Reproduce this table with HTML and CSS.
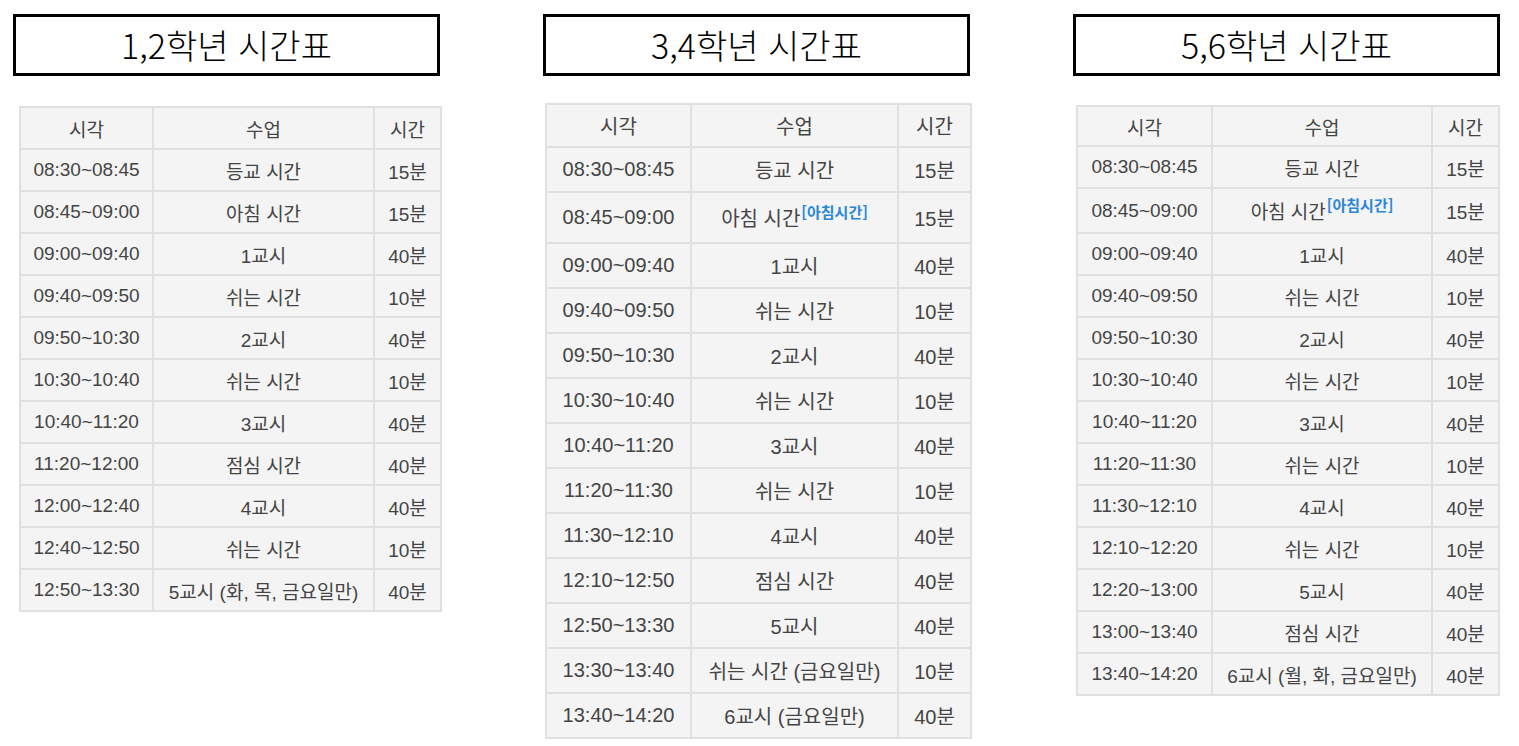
FILE: index.html
```html
<!DOCTYPE html>
<html lang="ko">
<head>
<meta charset="utf-8">
<title>시간표</title>
<link rel="stylesheet" href="styles.css">
</head>
<body>
<div class="page">
  <section class="col">
    <h2 class="title">1,2학년 시간표</h2>
    <table class="tt t1">
      <colgroup><col class="c1a"><col class="c1b"><col class="c1c"></colgroup>
      <tr><th>시각</th><th>수업</th><th>시간</th></tr>
      <tr><td>08:30~08:45</td><td>등교 시간</td><td>15분</td></tr>
      <tr><td>08:45~09:00</td><td>아침 시간</td><td>15분</td></tr>
      <tr><td>09:00~09:40</td><td>1교시</td><td>40분</td></tr>
      <tr><td>09:40~09:50</td><td>쉬는 시간</td><td>10분</td></tr>
      <tr><td>09:50~10:30</td><td>2교시</td><td>40분</td></tr>
      <tr><td>10:30~10:40</td><td>쉬는 시간</td><td>10분</td></tr>
      <tr><td>10:40~11:20</td><td>3교시</td><td>40분</td></tr>
      <tr><td>11:20~12:00</td><td>점심 시간</td><td>40분</td></tr>
      <tr><td>12:00~12:40</td><td>4교시</td><td>40분</td></tr>
      <tr><td>12:40~12:50</td><td>쉬는 시간</td><td>10분</td></tr>
      <tr><td>12:50~13:30</td><td>5교시 (화, 목, 금요일만)</td><td>40분</td></tr>
    </table>
  </section>
  <section class="col">
    <h2 class="title">3,4학년 시간표</h2>
    <table class="tt t2">
      <colgroup><col class="c2a"><col class="c2b"><col class="c2c"></colgroup>
      <tr><th>시각</th><th>수업</th><th>시간</th></tr>
      <tr><td>08:30~08:45</td><td>등교 시간</td><td>15분</td></tr>
      <tr class="tall"><td>08:45~09:00</td><td>아침 시간<sup class="ref">[아침시간]</sup></td><td>15분</td></tr>
      <tr><td>09:00~09:40</td><td>1교시</td><td>40분</td></tr>
      <tr><td>09:40~09:50</td><td>쉬는 시간</td><td>10분</td></tr>
      <tr><td>09:50~10:30</td><td>2교시</td><td>40분</td></tr>
      <tr><td>10:30~10:40</td><td>쉬는 시간</td><td>10분</td></tr>
      <tr><td>10:40~11:20</td><td>3교시</td><td>40분</td></tr>
      <tr><td>11:20~11:30</td><td>쉬는 시간</td><td>10분</td></tr>
      <tr><td>11:30~12:10</td><td>4교시</td><td>40분</td></tr>
      <tr><td>12:10~12:50</td><td>점심 시간</td><td>40분</td></tr>
      <tr><td>12:50~13:30</td><td>5교시</td><td>40분</td></tr>
      <tr><td>13:30~13:40</td><td>쉬는 시간 (금요일만)</td><td>10분</td></tr>
      <tr><td>13:40~14:20</td><td>6교시 (금요일만)</td><td>40분</td></tr>
    </table>
  </section>
  <section class="col">
    <h2 class="title">5,6학년 시간표</h2>
    <table class="tt t3">
      <colgroup><col class="c3a"><col class="c3b"><col class="c3c"></colgroup>
      <tr><th>시각</th><th>수업</th><th>시간</th></tr>
      <tr><td>08:30~08:45</td><td>등교 시간</td><td>15분</td></tr>
      <tr class="tall"><td>08:45~09:00</td><td>아침 시간<sup class="ref">[아침시간]</sup></td><td>15분</td></tr>
      <tr><td>09:00~09:40</td><td>1교시</td><td>40분</td></tr>
      <tr><td>09:40~09:50</td><td>쉬는 시간</td><td>10분</td></tr>
      <tr><td>09:50~10:30</td><td>2교시</td><td>40분</td></tr>
      <tr><td>10:30~10:40</td><td>쉬는 시간</td><td>10분</td></tr>
      <tr><td>10:40~11:20</td><td>3교시</td><td>40분</td></tr>
      <tr><td>11:20~11:30</td><td>쉬는 시간</td><td>10분</td></tr>
      <tr><td>11:30~12:10</td><td>4교시</td><td>40분</td></tr>
      <tr><td>12:10~12:20</td><td>쉬는 시간</td><td>10분</td></tr>
      <tr><td>12:20~13:00</td><td>5교시</td><td>40분</td></tr>
      <tr><td>13:00~13:40</td><td>점심 시간</td><td>40분</td></tr>
      <tr><td>13:40~14:20</td><td>6교시 (월, 화, 금요일만)</td><td>40분</td></tr>
    </table>
  </section>
</div>
</body>
</html>
```

FILE: styles.css
```css
html, body {
  margin: 0;
  padding: 0;
  background: #ffffff;
}

body {
  font-family: "Liberation Sans", "Noto Sans CJK KR", sans-serif;
  color: #444444;
}

.page {
  display: flex;
  gap: 103px;
  padding: 14px 0 0 13px;
}

.col {
  width: 427px;
  display: flex;
  flex-direction: column;
}

.title {
  box-sizing: border-box;
  height: 62px;
  margin: 0;
  border: 3px solid #000000;
  display: flex;
  align-items: center;
  justify-content: center;
  font-family: "Noto Sans CJK KR", "Liberation Sans", sans-serif;
  font-weight: 300;
  font-size: 34px;
  color: #000000;
  padding-bottom: 2px;
}

.tt {
  border-collapse: collapse;
  table-layout: fixed;
  background: #f4f4f4;
}

.tt th,
.tt td {
  border: 2px solid #e0e0e0;
  text-align: center;
  vertical-align: middle;
  padding: 0;
  font-weight: 400;
  white-space: nowrap;
}

.tt th {
  font-family: "Noto Sans CJK KR", sans-serif;
}

/* 1,2학년 */
.t1 {
  width: 421px;
  margin: 30px 0 0 6px;
  font-size: 19px;
}
.t1 th, .t1 td { height: 40px; }
.c1a { width: 133px; }
.c1b { width: 221px; }
.c1c { width: 67px; }

/* 3,4학년 */
.t2 {
  width: 425px;
  margin: 27px 0 0 2px;
  font-size: 20px;
}
.t2 th, .t2 td { height: 43px; }
.t2 th { height: 41px; }
.t2 .tall td { height: 49px; }
.c2a { width: 145px; }
.c2b { width: 207px; }
.c2c { width: 73px; }

/* 5,6학년 */
.t3 {
  width: 422px;
  margin: 29px 0 0 3px;
  font-size: 19px;
}
.t3 th, .t3 td { height: 40px; }
.t3 th { height: 38px; }
.t3 .tall td { height: 43px; }
.c3a { width: 135px; }
.c3b { width: 220px; }
.c3c { width: 67px; }

.ref {
  font-family: "Noto Sans CJK KR", sans-serif;
  font-size: 15px;
  font-weight: 700;
  color: #2a86d6;
  vertical-align: 8px;
  line-height: 0;
  margin-left: 1px;
}
```
